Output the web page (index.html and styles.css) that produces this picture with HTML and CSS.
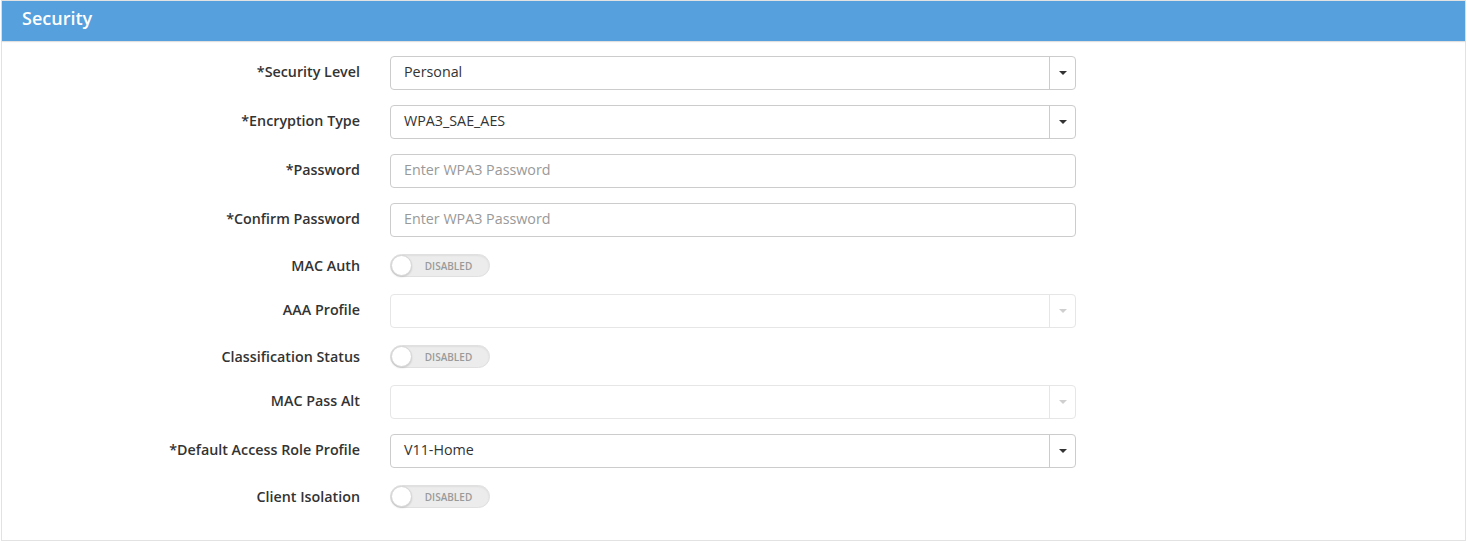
FILE: index.html
```html
<!DOCTYPE html>
<html>
<head>
<meta charset="utf-8">
<link rel="stylesheet" href="styles.css">
</head>
<body>
<div class="panel">
  <div class="panel-header">Security</div>
  <div class="panel-body">
    <div class="row">
      <label class="lbl">*Security Level</label>
      <div class="select"><span class="val">Personal</span><span class="caret"><i></i></span></div>
    </div>
    <div class="row">
      <label class="lbl">*Encryption Type</label>
      <div class="select"><span class="val">WPA3_SAE_AES</span><span class="caret"><i></i></span></div>
    </div>
    <div class="row">
      <label class="lbl">*Password</label>
      <input class="input" type="password" placeholder="Enter WPA3 Password">
    </div>
    <div class="row">
      <label class="lbl">*Confirm Password</label>
      <input class="input" type="password" placeholder="Enter WPA3 Password">
    </div>
    <div class="row toggle-row">
      <label class="lbl">MAC Auth</label>
      <div class="toggle"><span class="knob"></span><span class="ttext">DISABLED</span></div>
    </div>
    <div class="row">
      <label class="lbl">AAA Profile</label>
      <div class="select disabled"><span class="val"></span><span class="caret"><i></i></span></div>
    </div>
    <div class="row toggle-row">
      <label class="lbl">Classification Status</label>
      <div class="toggle"><span class="knob"></span><span class="ttext">DISABLED</span></div>
    </div>
    <div class="row">
      <label class="lbl">MAC Pass Alt</label>
      <div class="select disabled"><span class="val"></span><span class="caret"><i></i></span></div>
    </div>
    <div class="row">
      <label class="lbl">*Default Access Role Profile</label>
      <div class="select"><span class="val">V11-Home</span><span class="caret"><i></i></span></div>
    </div>
    <div class="row toggle-row">
      <label class="lbl">Client Isolation</label>
      <div class="toggle"><span class="knob"></span><span class="ttext">DISABLED</span></div>
    </div>
  </div>
</div>
</body>
</html>
```
FILE: styles.css
```css
html, body {
  margin: 0;
  padding: 0;
  background: #fff;
  font-family: "Open Sans", "Liberation Sans", sans-serif;
  color: #333;
}

.panel {
  margin: 0 2px 0 1px;
  border: 1px solid #e2e2e2;
  height: 541px;
  box-sizing: border-box;
}

.panel-header {
  height: 40px;
  background: #55a0dd;
  color: #fff;
  font-size: 18px;
  font-weight: 600;
  line-height: 35px;
  padding-left: 20px;
  box-shadow: 0 1px 1px rgba(0,0,0,0.12);
}

.panel-body {
  padding-top: 15px;
}

.row {
  display: grid;
  grid-template-columns: 358px 686px;
  column-gap: 30px;
  align-items: center;
  margin-bottom: 15px;
  height: 34px;
}

.toggle-row {
  height: 27px;
}

.lbl {
  text-align: right;
  font-size: 14.3px;
  font-weight: 600;
  color: #333;
  white-space: nowrap;
  padding-bottom: 3px;
}

.toggle-row .lbl {
  padding-bottom: 0;
}

.select, .input {
  box-sizing: border-box;
  height: 34px;
  border: 1px solid #cccccc;
  border-radius: 4px;
  background: #fff;
}

.select {
  display: flex;
  align-items: stretch;
}

.select .val {
  flex: 1;
  padding-left: 13px;
  font-size: 14.3px;
  line-height: 29px;
  color: #333;
}

.select .caret {
  width: 25px;
  border-left: 1px solid #cccccc;
  display: flex;
  align-items: center;
  justify-content: center;
}

.select .caret i {
  width: 0;
  height: 0;
  border-left: 4px solid transparent;
  border-right: 4px solid transparent;
  border-top: 4px solid #333;
}

.select.disabled {
  border-color: #e6e6e6;
}

.select.disabled .caret {
  border-left-color: #e6e6e6;
}

.select.disabled .caret i {
  border-top-color: #cfcfcf;
}

.input {
  width: 686px;
  padding: 0 13px 3px;
  font-family: "Open Sans", "Liberation Sans", sans-serif;
  font-size: 14.3px;
  color: #333;
  outline: none;
}

.input::placeholder {
  color: #999;
}

.toggle {
  box-sizing: border-box;
  width: 100px;
  height: 23px;
  border-radius: 12px;
  background: #ececec;
  border: 1px solid #e0e0e0;
  box-shadow: inset 0 1px 2px rgba(0,0,0,0.06);
  display: flex;
  align-items: center;
}

.knob {
  box-sizing: border-box;
  width: 21px;
  height: 21px;
  border-radius: 50%;
  background: #fff;
  border: 1px solid #d6d6d6;
  box-shadow: 0 1px 2px rgba(0,0,0,0.15);
  flex: none;
}

.ttext {
  flex: 1;
  text-align: center;
  font-size: 10px;
  font-weight: 600;
  color: #9a9a9a;
  padding-right: 4px;
}
```
